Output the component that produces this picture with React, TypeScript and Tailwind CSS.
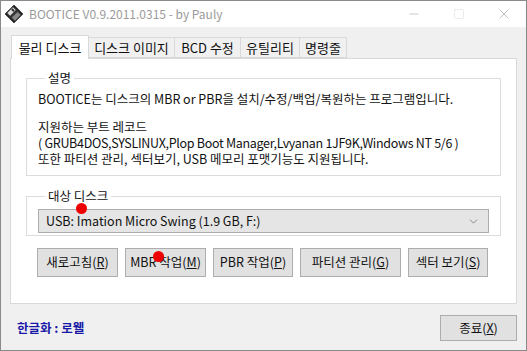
import { ChevronDown, Minus, Square, X } from "lucide-react";

const font = "font-['Noto_Sans_CJK_KR','Noto_Sans',sans-serif]";

const tabs = [
  { t: "물리 디스크", w: "w-[78px]" },
  { t: "디스크 이미지", w: "w-[86px]" },
  { t: "BCD 수정", w: "w-[66px]" },
  { t: "유틸리티", w: "w-[59px]" },
  { t: "명령줄", w: "w-[47px]" },
];

const buttons = [
  { label: "새로고침", key: "R", w: "w-[81px]" },
  { label: "MBR 작업", key: "M", w: "w-[81px]" },
  { label: "PBR 작업", key: "P", w: "w-[80px]" },
  { label: "파티션 관리", key: "G", w: "w-[101px]" },
  { label: "섹터 보기", key: "S", w: "w-[80px]" },
];

function DiskIcon() {
  return (
    <svg width="18" height="18" viewBox="0 0 18 18">
      <g transform="rotate(-45 9 9)">
        <rect x="3" y="3" width="12" height="12" fill="#333" stroke="#111" />
        <rect x="5" y="3.5" width="8" height="4" fill="#ddd" />
        <rect x="10" y="4" width="2" height="3" fill="#333" />
        <rect x="5" y="10" width="8" height="4.5" fill="#888" />
      </g>
    </svg>
  );
}

function Btn({ label, k, w }: { label: string; k: string; w: string }) {
  return (
    <button
      className={`${w} h-[29px] bg-[#e1e1e1] border border-[#adadad] text-[12.5px] text-[#111] flex items-center justify-center whitespace-nowrap`}
    >
      {label}(<span className="underline">{k}</span>)
    </button>
  );
}

export default function App() {
  return (
    <div
      className={`${font} w-[527px] h-[351px] bg-[#f0f0f0] border border-[#8a8a8a] flex flex-col relative overflow-hidden`}
    >
      {/* title bar */}
      <div className="h-[26px] bg-white flex items-center shrink-0">
        <div className="ml-[4px] mr-[6px]">
          <DiskIcon />
        </div>
        <span className="text-[12px] text-[#9a9a9a]">
          BOOTICE V0.9.2011.0315 - by Pauly
        </span>
        <div className="ml-auto flex items-center text-[#a0a0a0]">
          <div className="w-[45px] flex justify-center">
            <Minus size={14} strokeWidth={1} />
          </div>
          <div className="w-[45px] flex justify-center text-[#d6d6d6]">
            <Square size={12} strokeWidth={1} />
          </div>
          <div className="w-[45px] flex justify-center">
            <X size={16} strokeWidth={1} />
          </div>
        </div>
      </div>

      {/* tabs */}
      <div className="flex items-end ml-[10px] mt-[8px] h-[23px]">
        {tabs.map((tab, i) =>
          i === 0 ? (
            <div
              key={tab.t}
              className={`${tab.w} h-[24px] bg-white border border-b-0 border-[#d9d9d9] text-[13px] text-[#111] flex items-center justify-center whitespace-nowrap relative z-10 -mb-px`}
            >
              {tab.t}
            </div>
          ) : (
            <div
              key={tab.t}
              className={`${tab.w} h-[21px] bg-[#f0f0f0] border border-l-0 border-[#d9d9d9] text-[13px] text-[#111] flex items-center justify-center whitespace-nowrap`}
            >
              {tab.t}
            </div>
          )
        )}
      </div>

      {/* panel */}
      <div className="mx-[9px] h-[246px] bg-white border border-[#d9d9d9] px-[15px] pt-[12px]">
        <fieldset className="border border-[#dcdcdc] h-[105px] px-[11px]">
          <legend className="ml-[7px] px-[3px] text-[12.5px] text-[#111] leading-[14px]">
            설명
          </legend>
          <div className="text-[12.5px] leading-[16px] text-[#111] pt-[6px] whitespace-nowrap">
            <p>BOOTICE는 디스크의 MBR or PBR을 설치/수정/백업/복원하는 프로그램입니다.</p>
            <p className="mt-[12px]">지원하는 부트 레코드</p>
            <p className="tracking-[-0.3px]">
              ( GRUB4DOS,SYSLINUX,Plop Boot Manager,Lvyanan 1JF9K,Windows NT 5/6 )
            </p>
            <p>또한 파티션 관리, 섹터보기, USB 메모리 포맷기능도 지원됩니다.</p>
          </div>
        </fieldset>

        <fieldset className="border border-[#dcdcdc] h-[47px] mt-[13px] px-[11px]">
          <legend className="ml-[7px] px-[3px] text-[12.5px] text-[#111] leading-[14px]">
            대상 디스크
          </legend>
          <div className="mt-[6px] h-[24px] bg-[#e5e5e5] border border-[#adadad] flex items-center pl-[7px] pr-[8px] text-[12.5px] text-[#111]">
            USB: Imation Micro Swing (1.9 GB, F:)
            <ChevronDown size={13} strokeWidth={1.2} className="ml-auto text-[#555]" />
          </div>
        </fieldset>

        <div className="flex mt-[12px] ml-[11px] gap-[7px]">
          {buttons.map((b) => (
            <Btn key={b.key} label={b.label} k={b.key} w={b.w} />
          ))}
        </div>
      </div>

      {/* footer */}
      <div className="flex items-center px-[16px] mt-[11px]">
        <span className="text-[12.5px] font-bold text-[#1a1aa8]">한글화 : 로웰</span>
        <button className="ml-auto -mr-[7px] w-[77px] h-[26px] bg-[#e1e1e1] border border-[#adadad] text-[12.5px] text-[#111]">
          종료(<span className="underline">X</span>)
        </button>
      </div>

      {/* annotation dots */}
      <div className="absolute left-[75px] top-[202px] w-[11px] h-[11px] rounded-full bg-[#ee0000]" />
      <div className="absolute left-[152px] top-[250px] w-[11px] h-[11px] rounded-full bg-[#ee0000]" />
    </div>
  );
}
